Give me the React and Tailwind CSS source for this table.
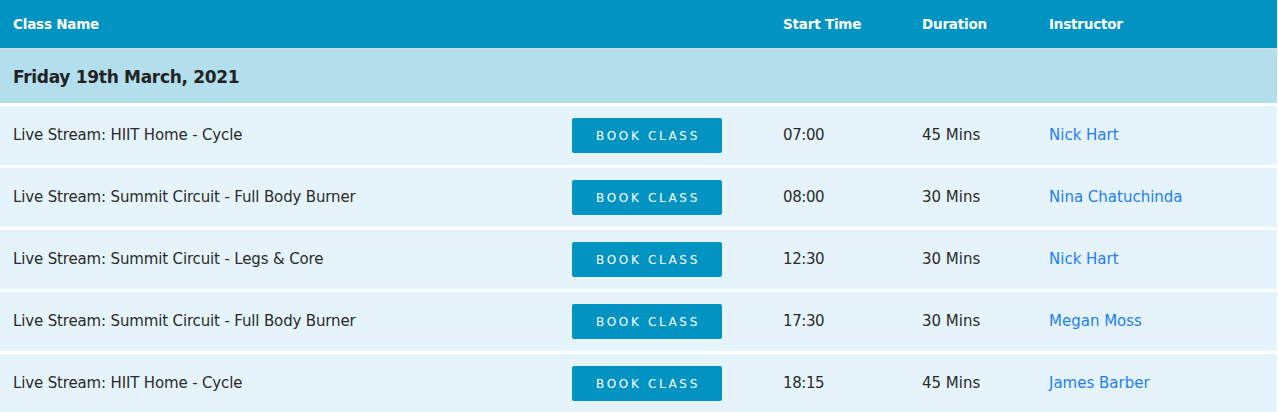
import React from "react";

const rows = [
  ["Live Stream: HIIT Home - Cycle", "07:00", "45 Mins", "Nick Hart"],
  ["Live Stream: Summit Circuit - Full Body Burner", "08:00", "30 Mins", "Nina Chatuchinda"],
  ["Live Stream: Summit Circuit - Legs & Core", "12:30", "30 Mins", "Nick Hart"],
  ["Live Stream: Summit Circuit - Full Body Burner", "17:30", "30 Mins", "Megan Moss"],
  ["Live Stream: HIIT Home - Cycle", "18:15", "45 Mins", "James Barber"],
];

export default function App() {
  return (
    <div className="w-[1278px] h-[412px] overflow-hidden bg-white font-['DejaVu_Sans',sans-serif]">
      <div className="w-[1277px]">
        <div className="flex items-center h-[49px] bg-[#0194c3] text-white font-bold text-[13.5px] tracking-[-0.2px] border-b border-[#d9d9d9]">
          <div className="w-[783px] pl-[13px]">Class Name</div>
          <div className="w-[139px]">Start Time</div>
          <div className="w-[127px]">Duration</div>
          <div className="flex-1">Instructor</div>
        </div>
        <div className="flex items-center h-[57px] pt-[3px] bg-[#b3deeb] pl-[13px] text-[17px] tracking-[-0.3px] font-bold text-[#222] border-b-[3px] border-white">
          Friday 19th March, 2021
        </div>
        {rows.map((r, i) => (
          <div key={i} className="flex items-center h-[62px] bg-[#e5f4fa] border-b-[3px] border-white text-[15px] text-[#2b2b2b]">
            <div className="w-[572px] pl-[13px] tracking-[-0.15px]">{r[0]}</div>
            <div className="w-[211px]">
              <button className="w-[150px] h-[35px] rounded-[2px] bg-[#0194c3] text-white text-[12px] tracking-[0.22em] pl-[2px]">
                BOOK CLASS
              </button>
            </div>
            <div className="w-[139px] tracking-[-0.4px]">{r[1]}</div>
            <div className="w-[127px]">{r[2]}</div>
            <div className="flex-1 text-[#1e7ef5]">{r[3]}</div>
          </div>
        ))}
      </div>
    </div>
  );
}
